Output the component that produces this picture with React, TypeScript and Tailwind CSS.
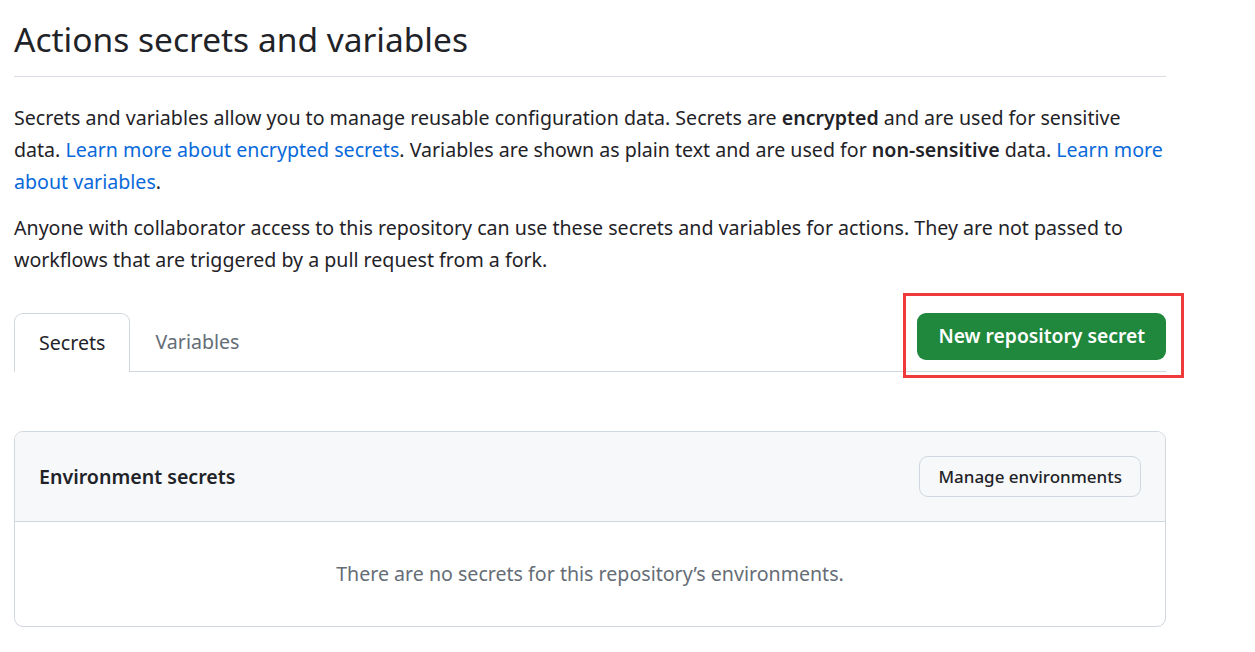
const font = { fontFamily: '"Noto Sans", "Open Sans", sans-serif' }

export default function App() {
  return (
    <div className="min-h-[652px] bg-white text-[#1f2328]" style={font}>
      <div className="ml-[14px] w-[1152px] pt-[15px]">
        {/* heading */}
        <div className="border-b border-[#d8dee4] pb-[13px]">
          <h2 className="text-[33.5px] font-normal leading-[48px]">Actions secrets and variables</h2>
        </div>

        {/* intro text */}
        <p className="mt-[25px] text-[19.6px] leading-[32px]">
          Secrets and variables allow you to manage reusable configuration data. Secrets are{' '}
          <strong className="font-semibold">encrypted</strong> and are used for sensitive data.{' '}
          <a className="text-[#0969da]">Learn more about encrypted secrets</a>. Variables are shown as plain text
          and are used for <strong className="font-semibold">non-sensitive</strong> data.{' '}
          <a className="text-[#0969da]">Learn more about variables</a>.
        </p>
        <p className="mt-[14px] text-[19.6px] leading-[32px]">
          Anyone with collaborator access to this repository can use these secrets and variables for actions. They
          are not passed to workflows that are triggered by a pull request from a fork.
        </p>

        {/* tabs row */}
        <div className="mt-[37px] flex items-start border-b border-[#d0d7de]">
          <div className="-mb-px flex h-[59px] items-center rounded-t-[9px] border border-b-0 border-[#d0d7de] bg-white px-[24px] text-[19.6px]">
            Secrets
          </div>
          <div className="flex h-[58px] items-center px-[25px] text-[19.6px] text-[#656d76]">Variables</div>
          <div className="relative ml-auto">
            <button className="h-[47px] rounded-[9px] bg-[#1f883d] px-[21px] text-[19.3px] font-semibold text-white">
              New repository secret
            </button>
            <div className="absolute -left-[14px] -right-[18px] -top-[20px] -bottom-[18px] border-[3px] border-[#ee3a3a]" />
          </div>
        </div>

        {/* environment secrets box */}
        <div className="mt-[59px] overflow-hidden rounded-[9px] border border-[#d0d7de]">
          <div className="flex h-[90px] items-center justify-between border-b border-[#d0d7de] bg-[#f6f8fa] pl-[24px] pr-[24px]">
            <span className="text-[19.6px] font-semibold">Environment secrets</span>
            <button className="h-[41px] rounded-[9px] border border-[#d0d7de] bg-[#f6f8fa] px-[18px] text-[17px] font-medium">
              Manage environments
            </button>
          </div>
          <div className="flex h-[104px] items-center justify-center text-[19.6px] text-[#656d76]">
            There are no secrets for this repository’s environments.
          </div>
        </div>
      </div>
    </div>
  )
}
